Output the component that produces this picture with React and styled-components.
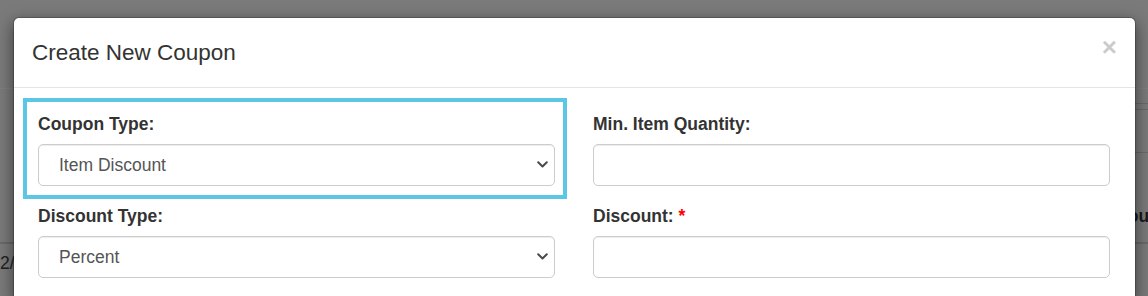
import React from 'react';
import styled, { createGlobalStyle } from 'styled-components';

const GlobalStyle = createGlobalStyle`
  html, body {
    margin: 0;
    padding: 0;
  }
  body {
    font-family: "Liberation Sans", Arial, sans-serif;
    background: #f4f4f4;
    overflow: hidden;
  }
`;

const Page = styled.div`
  position: relative;
  width: 1148px;
  height: 296px;
  overflow: hidden;
  background: #f4f4f4;
  color: #333;
  font-size: 17.5px;
`;

// page behind the dialog, only its edges stay visible
const NavBar = styled.div`
  height: 88px;
  border-bottom: 1px solid #ffffff;
`;

const PanelTop = styled.div`
  margin: 14px 0 0 20px;
  height: 5px;
  border-top: 1px solid #d2d2d2;
  border-bottom: 1px solid #d2d2d2;
`;

const PanelBar = styled.div`
  margin-left: 20px;
  height: 42px;
  border-bottom: 1px solid #d2d2d2;
`;

const HeadRow = styled.div`
  height: 74px;
  padding-bottom: 15px;
  display: flex;
  justify-content: flex-end;
  align-items: flex-end;
  border-bottom: 2px solid #d2d2d2;
  font-weight: bold;
`;

const HeadCell = styled.span`
  margin-right: -8px;
`;

const BodyRow = styled.div`
  padding: 9px 0;
  color: #444;
`;

const Overlay = styled.div`
  position: absolute;
  inset: 0;
  background: rgba(0, 0, 0, 0.5);
  display: flex;
  flex-direction: column;
`;

const Modal = styled.div`
  margin: 17px 12px 0 13px;
  background: #fff;
  border: 1px solid rgba(0, 0, 0, 0.2);
  background-clip: padding-box;
  border-radius: 6px 6px 0 0;
  box-shadow: 0 5px 15px rgba(0, 0, 0, 0.5);
  flex: 1;
`;

const Header = styled.div`
  display: flex;
  justify-content: space-between;
  align-items: flex-start;
  padding: 19px 18px 19px 18px;
  border-bottom: 1px solid #e5e5e5;
`;

const Title = styled.h4`
  margin: 0;
  font-size: 22.5px;
  line-height: 31px;
  font-weight: 500;
  color: #333;
`;

const Close = styled.button`
  background: none;
  border: 0;
  padding: 0;
  margin-top: -3px;
  font-family: inherit;
  font-size: 26px;
  font-weight: bold;
  line-height: 1;
  color: #000;
  opacity: 0.2;
  cursor: pointer;
`;

const Body = styled.div`
  padding: 24px 25px 20px 24px;
  display: grid;
  grid-template-columns: 1fr 1fr;
  column-gap: 38px;
  row-gap: 18px;
`;

const FormGroup = styled.div`
  display: flex;
  flex-direction: column;
  ${p => p.$highlight && `
    margin: -14px -12px -13px -15px;
    padding: 10px 8px 9px 11px;
    border: 4px solid #5cc6e6;
  `}
`;

const Label = styled.label`
  font-size: 17.5px;
  line-height: 25px;
  font-weight: bold;
  color: #333;
  margin-bottom: 7px;
`;

const Required = styled.span`
  color: #f00;
`;

const fieldCss = `
  box-sizing: border-box;
  width: 100%;
  height: 42px;
  padding: 7px 14px;
  font-family: inherit;
  font-size: 17.5px;
  color: #555;
  background: #fff;
  border: 1px solid #ccc;
  border-radius: 5px;
  box-shadow: inset 0 1px 1px rgba(0, 0, 0, 0.075);
  outline: none;
`;

const SelectWrap = styled.div`
  position: relative;
`;

const Select = styled.select`
  ${fieldCss}
  appearance: none;
  padding-left: 20px;
  padding-right: 30px;
`;

const Chevron = styled.svg`
  position: absolute;
  right: 7px;
  top: 17px;
  width: 11px;
  height: 7px;
  pointer-events: none;
`;

const Input = styled.input`
  ${fieldCss}
`;

const ChevronIcon = () => (
  <Chevron viewBox="0 0 11 7">
    <polyline points="1.2,1.2 5.5,5.5 9.8,1.2" fill="none" stroke="#4a4a4a" strokeWidth="2" strokeLinecap="round" strokeLinejoin="round" />
  </Chevron>
);

const SelectField = ({ defaultValue, options }) => (
  <SelectWrap>
    <Select defaultValue={defaultValue}>
      {options.map(o => (
        <option key={o.value} value={o.value}>{o.label}</option>
      ))}
    </Select>
    <ChevronIcon />
  </SelectWrap>
);

const App = () => {
  return (
    <Page>
      <GlobalStyle />
      <NavBar />
      <PanelTop />
      <PanelBar />
      <HeadRow>
        <HeadCell>Hour</HeadCell>
      </HeadRow>
      <BodyRow>2/14/2024</BodyRow>

      <Overlay>
        <Modal>
          <Header>
            <Title>Create New Coupon</Title>
            <Close type="button">×</Close>
          </Header>
          <Body>
            <FormGroup $highlight>
              <Label>Coupon Type:</Label>
              <SelectField
                defaultValue="item"
                options={[
                  { value: 'item', label: 'Item Discount' },
                  { value: 'order', label: 'Order Discount' }
                ]}
              />
            </FormGroup>
            <FormGroup>
              <Label>Min. Item Quantity:</Label>
              <Input type="text" />
            </FormGroup>
            <FormGroup>
              <Label>Discount Type:</Label>
              <SelectField
                defaultValue="percent"
                options={[
                  { value: 'percent', label: 'Percent' },
                  { value: 'amount', label: 'Amount' }
                ]}
              />
            </FormGroup>
            <FormGroup>
              <Label>
                Discount: <Required>*</Required>
              </Label>
              <Input type="text" />
            </FormGroup>
          </Body>
        </Modal>
      </Overlay>
    </Page>
  );
};

export default App;
